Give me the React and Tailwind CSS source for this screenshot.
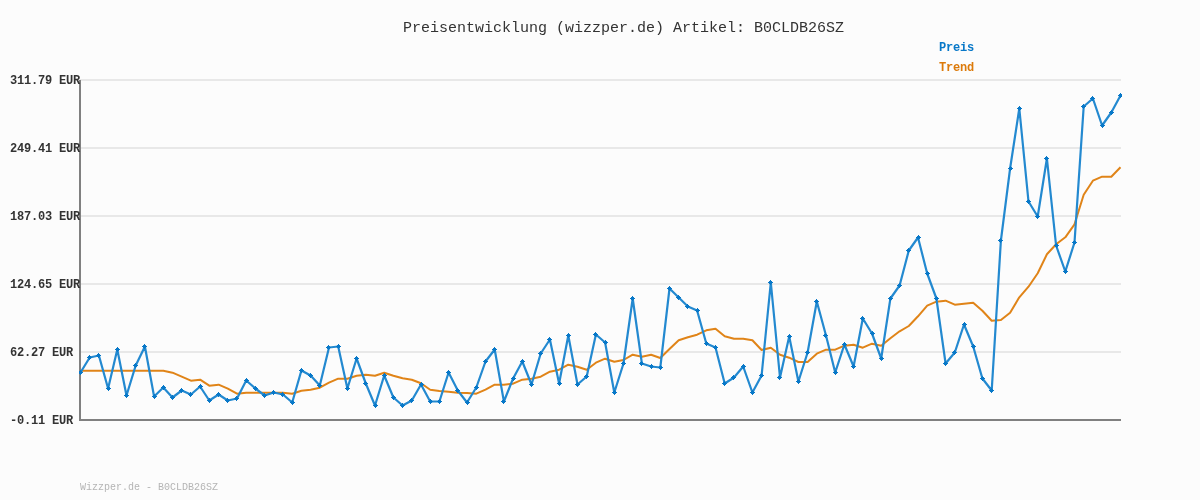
const price = [
  372, 357, 355, 388, 349, 395, 365, 346, 396, 387, 397, 390, 394, 386, 400, 394, 400, 398, 380, 388,
  395, 392, 394, 402, 370, 375, 385, 347, 346, 388, 358, 383, 405, 375, 397, 405, 400, 384, 401, 401,
  372, 390, 402, 387, 361, 349, 401, 378, 361, 384, 353, 339, 383, 335, 384, 376, 334, 342, 392, 363,
  298, 363, 366, 367, 288, 297, 306, 310, 343, 347, 383, 377, 366, 392, 375, 282, 377, 336, 381, 352,
  301, 335, 372, 344, 366, 318, 333, 358, 298, 285, 250, 237, 273, 298, 363, 352, 324, 346, 378, 390,
  240, 168, 108, 201, 216, 158, 245, 271, 242, 106, 98, 125, 112, 95,
];

const trend = [
  370.7, 370.7, 370.7, 370.7, 370.7, 370.7, 370.7, 370.7, 370.7, 370.7, 372.7, 376.7, 380.7, 379.7, 385.7,
  384.7, 388.7, 393.7, 392.7, 392.7, 392.7, 392.7, 392.7, 393.7, 390.7, 389.7, 387.7, 382.7, 378.7, 378.7,
  375.7, 374.7, 375.7, 372.7, 375.7, 378.3, 379.7, 383.3, 389.7, 391, 391.7, 392.7, 393, 393.7, 389.7,
  384.7, 384.7, 383.7, 379.7, 378.7, 376.7, 371.7, 369.7, 364.7, 366.7, 369.7, 362.7, 358.7, 361.7, 360,
  354.7, 356.7, 354.7, 358, 349, 340.3, 337.3, 334.7, 330.3, 328.7, 336.3, 338.7, 338.7, 340.3, 350,
  347.7, 354.7, 357.7, 362, 362, 353.7, 349.7, 349.7, 345.7, 344.7, 347.7, 343.7, 345.7, 338.3, 331.3,
  326, 316.3, 305.7, 301.7, 300.7, 304.7, 303.7, 302.7, 310.7, 320.7, 320, 312.7, 297.3, 286.7, 273.3,
  254.3, 244.3, 237.3, 224.3, 194.7, 180.7, 176.7, 176.7, 167.3,
];

const labels = ['311.79 EUR', '249.41 EUR', '187.03 EUR', '124.65 EUR', '62.27 EUR', '-0.11 EUR'];
const gridY = [80, 148, 216, 284, 352];

const xAt = (i) => 80.5 + (i * 1040) / 113;
const points = (ys, dy = 0) => ys.map((y, i) => `${xAt(i).toFixed(1)},${y + dy}`).join(' ');

function Chart() {
  return (
    <svg viewBox="79 79 1043 342" className="mt-[6px] h-[342px] w-[1043px] shrink-0">
      {gridY.map((y) => (
        <line key={y} x1="80" x2="1121" y1={y} y2={y} stroke="#e8e8e8" strokeWidth="2" />
      ))}
      <path d="M80 80V420H1121" fill="none" stroke="#808080" strokeWidth="2" />
      <polyline points={points(trend)} fill="none" stroke="#e08418" strokeWidth="2" strokeLinejoin="round" />
      <polyline points={points(price, 0.5)} fill="none" stroke="#2389d0" strokeWidth="2.2" strokeLinejoin="round" />
      {price.map((y, i) => {
        const x = Math.floor(xAt(i));
        // stepped diamond marker, 5px across
        return (
          <path
            key={i}
            d={`M${x} ${y - 2}h1v1h1v1h1v1h-1v1h-1v1h-1v-1h-1v-1h-1v-1h1v-1h1z`}
            fill="#0878c8"
            shapeRendering="crispEdges"
          />
        );
      })}
    </svg>
  );
}

export default function App() {
  return (
    <div className="flex h-[500px] w-[1200px] flex-col bg-[#fcfcfc] font-['Liberation_Mono',monospace] text-[#333333]">
      <h1 className="h-[41px] pt-[20px] pl-[403px] text-[15px] leading-[17px] font-normal will-change-transform">
        Preisentwicklung (wizzper.de) Artikel: B0CLDB26SZ
      </h1>
      <ul className="flex h-[32px] flex-col gap-[6px] pl-[939px] text-[12px] leading-[14px] font-bold tracking-[-0.2px] will-change-transform">
        <li className="text-[#0878c8]">Preis</li>
        <li className="text-[#dc7a0a]">Trend</li>
      </ul>
      <div className="flex items-start">
        <div className="mt-[1px] flex h-[354px] w-[79px] shrink-0 flex-col justify-between pl-[10px] text-[12px] leading-[14px] font-bold tracking-[-0.2px] will-change-transform">
          {labels.map((label) => (
            <span key={label} className="whitespace-nowrap">{label}</span>
          ))}
        </div>
        <Chart />
      </div>
      <footer className="mt-[53px] pl-[80px] text-[10px] leading-[14px] text-[#b4b4b4] will-change-transform">
        Wizzper.de - B0CLDB26SZ
      </footer>
    </div>
  );
}
